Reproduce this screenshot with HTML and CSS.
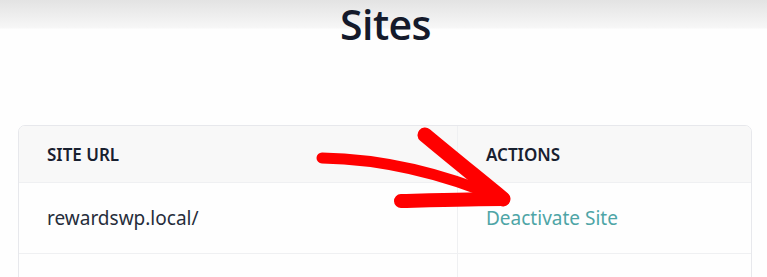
FILE: index.html
```html
<!DOCTYPE html>
<html>
<head>
<meta charset="utf-8">
<link rel="stylesheet" href="styles.css">
</head>
<body>
<div class="page">
  <h1 class="title">Sites</h1>
  <div class="card">
    <div class="row head">
      <div class="cell c1">SITE URL</div>
      <div class="cell c2">ACTIONS</div>
    </div>
    <div class="row">
      <div class="cell c1">rewardswp.local/</div>
      <div class="cell c2"><a class="link">Deactivate Site</a></div>
    </div>
    <div class="row last">
      <div class="cell c1"></div>
      <div class="cell c2"></div>
    </div>
  </div>
  <svg class="arrow" width="767" height="277" viewBox="0 0 767 277">
    <path d="M322 158 C 380 159, 440 172, 503 199" fill="none" stroke="#ff0000" stroke-width="11" stroke-linecap="round"/>
    <path d="M425 135 C 455 160, 480 180, 503 199" fill="none" stroke="#ff0000" stroke-width="15" stroke-linecap="round"/>
    <path d="M401 201 C 440 200, 475 199, 503 199" fill="none" stroke="#ff0000" stroke-width="14" stroke-linecap="round"/>
  </svg>
</div>
</body>
</html>
```
FILE: styles.css
```css
html {
  background: linear-gradient(#e3e3e3 0, #f7f7f7 28px, #fefefe 29px);
  background-repeat: no-repeat;
  background-color: #fefefe;
}
body {
  margin: 0;
  font-family: "Noto Sans", "Open Sans", sans-serif;
}
.page {
  position: relative;
  width: 767px;
  height: 277px;
  overflow: hidden;
}
.title {
  margin: 3px 0 0 0;
  padding-left: 4px;
  text-align: center;
  font-family: "Open Sans", sans-serif;
  font-weight: 600;
  font-size: 41px;
  line-height: 42px;
  color: #141a2b;
  letter-spacing: -0.6px;
}
.card {
  margin: 80px 0 0 18px;
  width: 732px;
  border: 1px solid #e7e8ec;
  border-radius: 7px;
  overflow: hidden;
  background: #fefefe;
}
.row {
  display: flex;
  height: 70px;
  border-bottom: 1px solid #eff0f2;
}
.row.head {
  height: 56px;
  background: #f8f8f8;
}
.cell {
  display: flex;
  align-items: center;
  font-size: 19px;
  color: #262d3b;
}
.c1 {
  width: 410px;
  padding-left: 28px;
  border-right: 1px solid #eff0f2;
}
.c2 {
  padding-left: 28px;
}
.head .cell {
  font-weight: 600;
  font-size: 17px;
  color: #18202f;
}
.link {
  color: #4ea5a6;
}
.arrow {
  position: absolute;
  left: 0;
  top: 0;
}
```
